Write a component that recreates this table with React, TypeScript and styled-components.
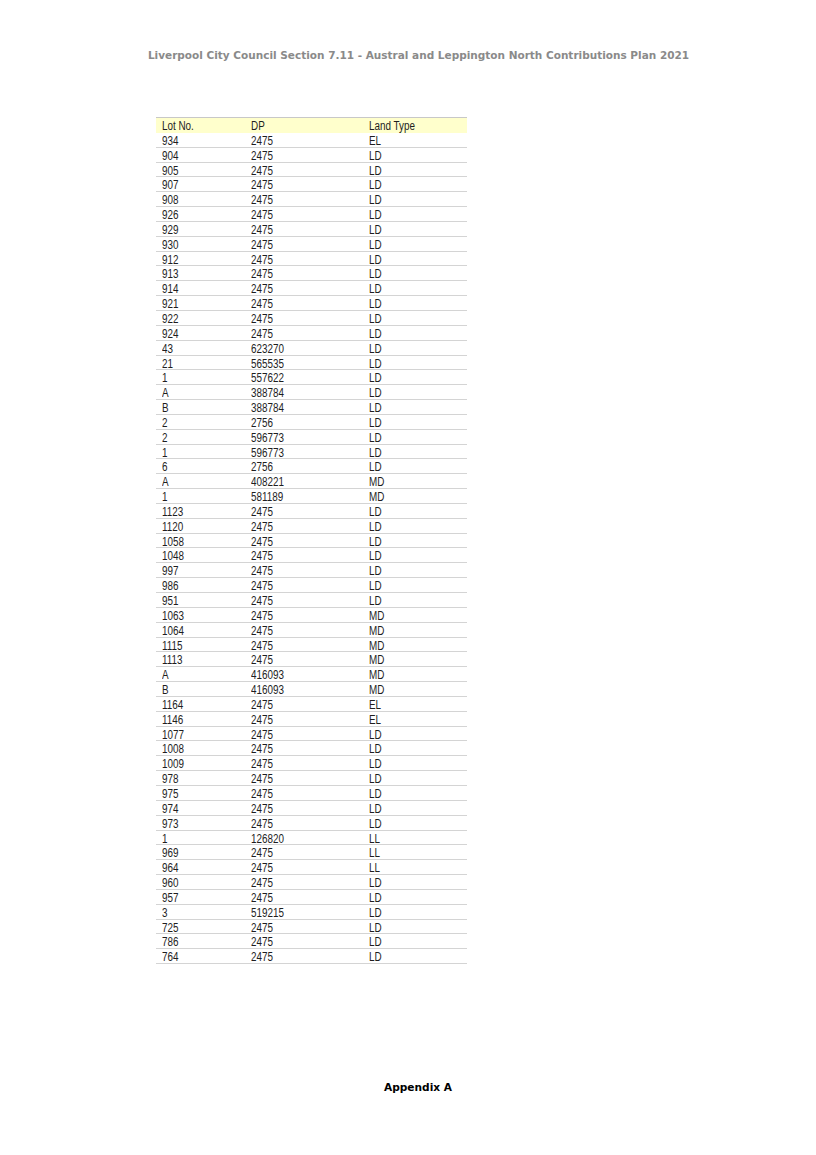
import React from "react";
import styled, { createGlobalStyle } from "styled-components";

const Global = createGlobalStyle`
  html, body { margin: 0; padding: 0; background: #ffffff; }
  body { width: 816px; }
`;

const Page = styled.div`
  width: 816px;
  height: 1155px;
  display: flex;
  flex-direction: column;
  align-items: center;
  box-sizing: border-box;
  padding-top: 48px;
`;

const RunningHead = styled.div`
  margin-left: 21px;
  font-family: "DejaVu Sans", Verdana, sans-serif;
  font-weight: bold;
  font-size: 10.5px;
  color: #8a8a8a;
  line-height: 14px;
  white-space: nowrap;
`;

const Table = styled.div`
  margin-top: 55px;
  margin-left: -193px;
  width: 311px;
  display: flex;
  flex-direction: column;
  border-top: 1px solid #c8c8c8;
  font-family: "Liberation Sans", Arial, sans-serif;
  font-size: 12.5px;
  color: #1e1e1e;
`;

const Row = styled.div<{ $head?: boolean }>`
  display: grid;
  grid-template-columns: 89px 118px 104px;
  height: 14.85px;
  box-sizing: border-box;
  align-items: center;
  background: ${(p) => (p.$head ? "#ffffcc" : "transparent")};
  border-bottom: 1px solid ${(p) => (p.$head ? "#ffffcc" : "#d4d4d4")};
`;

const Cell = styled.div`
  padding-left: 6px;
  line-height: 13px;
  white-space: nowrap;
  padding-top: 2px;
`;

const Text = styled.span`
  display: inline-block;
  transform: scaleX(0.79);
  transform-origin: left center;
`;

const Footer = styled.div`
  margin-top: auto;
  margin-bottom: 61px;
  margin-left: 20px;
  font-family: "DejaVu Sans", Verdana, sans-serif;
  font-weight: bold;
  font-size: 10.6px;
  color: #000;
  line-height: 14px;
`;

const data: [string, string, string][] = [
  ["934", "2475", "EL"],
  ["904", "2475", "LD"],
  ["905", "2475", "LD"],
  ["907", "2475", "LD"],
  ["908", "2475", "LD"],
  ["926", "2475", "LD"],
  ["929", "2475", "LD"],
  ["930", "2475", "LD"],
  ["912", "2475", "LD"],
  ["913", "2475", "LD"],
  ["914", "2475", "LD"],
  ["921", "2475", "LD"],
  ["922", "2475", "LD"],
  ["924", "2475", "LD"],
  ["43", "623270", "LD"],
  ["21", "565535", "LD"],
  ["1", "557622", "LD"],
  ["A", "388784", "LD"],
  ["B", "388784", "LD"],
  ["2", "2756", "LD"],
  ["2", "596773", "LD"],
  ["1", "596773", "LD"],
  ["6", "2756", "LD"],
  ["A", "408221", "MD"],
  ["1", "581189", "MD"],
  ["1123", "2475", "LD"],
  ["1120", "2475", "LD"],
  ["1058", "2475", "LD"],
  ["1048", "2475", "LD"],
  ["997", "2475", "LD"],
  ["986", "2475", "LD"],
  ["951", "2475", "LD"],
  ["1063", "2475", "MD"],
  ["1064", "2475", "MD"],
  ["1115", "2475", "MD"],
  ["1113", "2475", "MD"],
  ["A", "416093", "MD"],
  ["B", "416093", "MD"],
  ["1164", "2475", "EL"],
  ["1146", "2475", "EL"],
  ["1077", "2475", "LD"],
  ["1008", "2475", "LD"],
  ["1009", "2475", "LD"],
  ["978", "2475", "LD"],
  ["975", "2475", "LD"],
  ["974", "2475", "LD"],
  ["973", "2475", "LD"],
  ["1", "126820", "LL"],
  ["969", "2475", "LL"],
  ["964", "2475", "LL"],
  ["960", "2475", "LD"],
  ["957", "2475", "LD"],
  ["3", "519215", "LD"],
  ["725", "2475", "LD"],
  ["786", "2475", "LD"],
  ["764", "2475", "LD"],
];

export default function App() {
  return (
    <>
      <Global />
      <Page>
        <RunningHead>
          Liverpool City Council Section 7.11 - Austral and Leppington North Contributions Plan 2021
        </RunningHead>
        <Table>
          <Row $head>
            <Cell><Text>Lot No.</Text></Cell>
            <Cell><Text>DP</Text></Cell>
            <Cell><Text>Land Type</Text></Cell>
          </Row>
          {data.map((r, i) => (
            <Row key={i}>
              <Cell><Text>{r[0]}</Text></Cell>
              <Cell><Text>{r[1]}</Text></Cell>
              <Cell><Text>{r[2]}</Text></Cell>
            </Row>
          ))}
        </Table>
        <Footer>Appendix A</Footer>
      </Page>
    </>
  );
}
